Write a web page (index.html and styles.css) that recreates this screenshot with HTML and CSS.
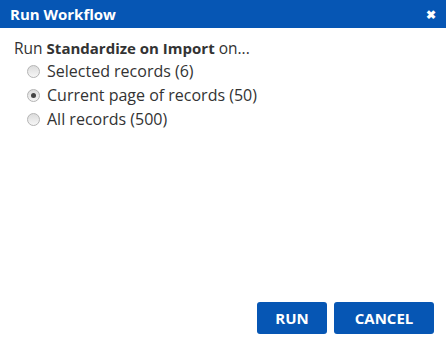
FILE: index.html
```html
<!DOCTYPE html>
<html lang="en">
<head>
  <meta charset="UTF-8" />
  <title>Run Workflow</title>
  <link rel="stylesheet" href="styles.css">
</head>
<body>
  <div class="dialog">
    <div class="dialog-header">
      <span class="dialog-title">Run Workflow</span>
      <span class="close">&#10006;</span>
    </div>
    <div class="dialog-body">
      <p class="intro">Run <b>Standardize on Import</b> on...</p>
      <label class="option"><input type="radio" name="scope" /> Selected records (6)</label>
      <label class="option"><input type="radio" name="scope" checked /> Current page of records (50)</label>
      <label class="option"><input type="radio" name="scope" /> All records (500)</label>
    </div>
    <div class="dialog-footer">
      <button class="btn run">RUN</button>
      <button class="btn cancel">CANCEL</button>
    </div>
  </div>
</body>
</html>
```

FILE: styles.css
```css
html, body {
  margin: 0;
  height: 100%;
}
body {
  font-family: 'Open Sans', sans-serif;
  color: #333;
  background: #fff;
}
.dialog {
  height: 100%;
  display: flex;
  flex-direction: column;
}
.dialog-header {
  height: 28px;
  background-color: #0656b4;
  color: #fff;
  display: flex;
  align-items: center;
  justify-content: space-between;
  padding: 0 10px;
}
.dialog-title {
  font-weight: bold;
  font-size: 15px;
}
.close {
  font-size: 12px;
  font-weight: bold;
}
.dialog-body {
  flex: 1;
  padding: 9px 14px 0;
}
.intro {
  margin: 0;
  font-size: 15.5px;
  line-height: 22px;
}
.intro b {
  font-size: 15px;
}
.option {
  display: flex;
  align-items: center;
  height: 24px;
  font-size: 16px;
  padding-left: 13px;
}
.option input {
  appearance: none;
  -webkit-appearance: none;
  width: 13px;
  height: 13px;
  margin: 0 7px 0 0;
  border: 1px solid #b4b4b4;
  border-radius: 50%;
  background: linear-gradient(to bottom, #dcdcdc, #f6f6f6);
  box-sizing: border-box;
  position: relative;
}
.option input:checked::after {
  content: "";
  position: absolute;
  left: 3px;
  top: 3px;
  width: 5px;
  height: 5px;
  border-radius: 50%;
  background: #444;
}
.dialog-footer {
  display: flex;
  justify-content: flex-end;
  gap: 7px;
  padding: 0 12px 6px;
}
.btn {
  height: 32px;
  border: none;
  border-radius: 3px;
  background-color: #0656b4;
  color: #fff;
  font-family: 'Open Sans', sans-serif;
  font-weight: bold;
  font-size: 15px;
  cursor: pointer;
}
.run {
  width: 70px;
}
.cancel {
  width: 100px;
}
```
